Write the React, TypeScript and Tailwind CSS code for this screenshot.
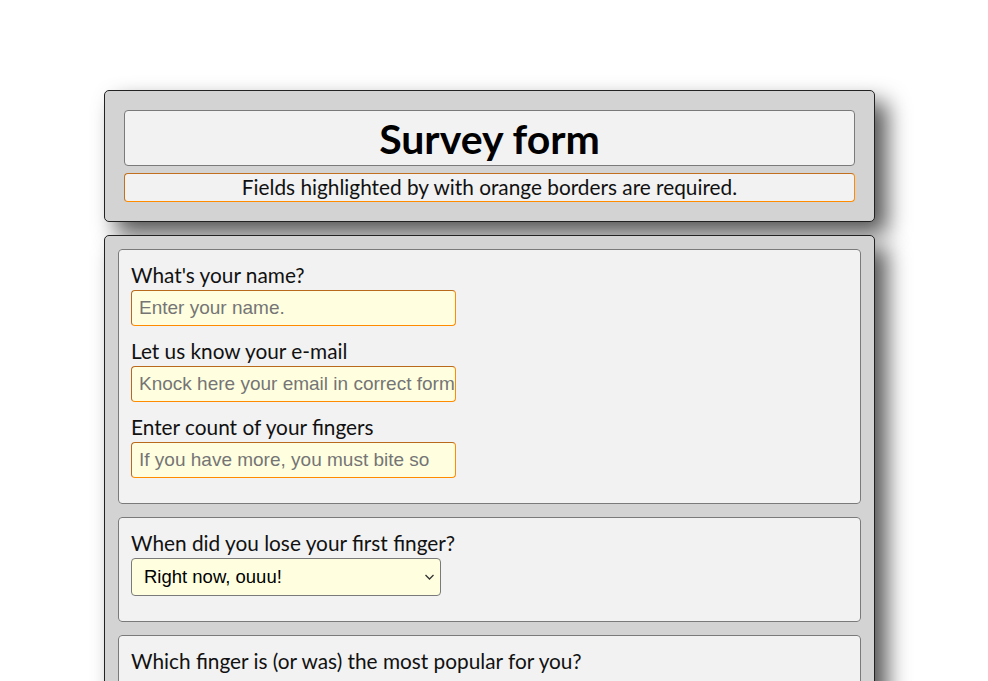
import React from "react";

const labelCls = "block text-[20.8px] leading-[24px] text-[#111]";
const inputCls =
  "mt-[3px] block w-[325px] h-[36px] rounded-[4px] border border-[#ff8c00] border-t-[#b8691c] border-l-[#b8691c] bg-[#ffffe0] pl-[7px] text-[19px] text-black placeholder:text-[#757575] outline-none";
const fieldsetCls =
  "rounded-[4px] border border-[#7a7a7a] bg-[#f2f2f2] px-[12px] pt-[13px] pb-[25px]";
const arial = { fontFamily: "'Liberation Sans', Arial, sans-serif" };

export default function App() {
  return (
    <div
      className="min-h-[681px] bg-white pt-[90px] pb-[40px]"
      style={{ fontFamily: "Lato, 'Open Sans', sans-serif" }}
    >
      <div className="ml-[104px] w-[771px] rounded-[5px] border border-[#222] bg-[#d3d3d3] px-[19px] pt-[19px] pb-[19px] shadow-[12px_12px_22px_#555]">
        <div className="flex h-[56px] items-center justify-center rounded-[4px] border border-[#7a7a7a] bg-[#f2f2f2]">
          <h1 className="text-[41px] font-bold leading-none text-black">Survey form</h1>
        </div>
        <div className="mt-[7px] flex h-[29px] items-center justify-center rounded-[4px] border border-[#ff8c00] border-t-[#c0701e] border-l-[#c0701e] bg-[#f2f2f2]">
          <p className="text-[20.8px] leading-none text-[#111]">
            Fields highlighted by with orange borders are required.
          </p>
        </div>
      </div>

      <form className="mt-[13px] ml-[104px] flex w-[771px] flex-col gap-[13px] rounded-[5px] border border-[#222] bg-[#d3d3d3] p-[13px] shadow-[12px_12px_22px_#555]">
        <fieldset className={fieldsetCls}>
          <div>
            <label className={labelCls} htmlFor="name">What's your name?</label>
            <input
              id="name"
              type="text"
              placeholder="Enter your name."
              className={`${inputCls} pr-[2px]`}
              style={arial}
            />
          </div>
          <div className="mt-[13px]">
            <label className={labelCls} htmlFor="email">Let us know your e-mail</label>
            <input
              id="email"
              type="email"
              placeholder="Knock here your email in correct format"
              className={`${inputCls} pr-0`}
              style={arial}
            />
          </div>
          <div className="mt-[13px]">
            <label className={labelCls} htmlFor="number">Enter count of your fingers</label>
            <input
              id="number"
              type="number"
              placeholder="If you have more, you must bite some"
              className={`${inputCls} pr-[10px]`}
              style={arial}
            />
          </div>
        </fieldset>

        <fieldset className={fieldsetCls}>
          <label className={labelCls} htmlFor="lose">When did you lose your first finger?</label>
          <div className="relative mt-[3px] w-[310px]">
            <select
              id="lose"
              defaultValue="now"
              className="block h-[38px] w-[310px] appearance-none rounded-[4px] border border-[#7a7a7a] bg-[#ffffe0] pl-[12px] text-[18.5px] text-black"
              style={arial}
            >
              <option value="now">Right now, ouuu!</option>
              <option value="child">In childhood</option>
              <option value="never">Never</option>
            </select>
            <svg
              className="pointer-events-none absolute right-[6px] top-[15px]"
              width="11"
              height="8"
              viewBox="0 0 11 8"
              fill="none"
            >
              <path d="M1.5 2 L5.5 6 L9.5 2" stroke="#333" strokeWidth="1.3" />
            </svg>
          </div>
        </fieldset>

        <fieldset className={fieldsetCls}>
          <p className={labelCls}>Which finger is (or was) the most popular for you?</p>
          <div className="mt-[20px] flex flex-col gap-[4px] text-[18px]">
            {["Thumb", "Index finger", "Middle finger", "Ring finger", "Little finger"].map((f) => (
              <label key={f} className="flex items-center gap-2">
                <input type="radio" name="finger" />
                {f}
              </label>
            ))}
          </div>
        </fieldset>
      </form>
    </div>
  );
}
